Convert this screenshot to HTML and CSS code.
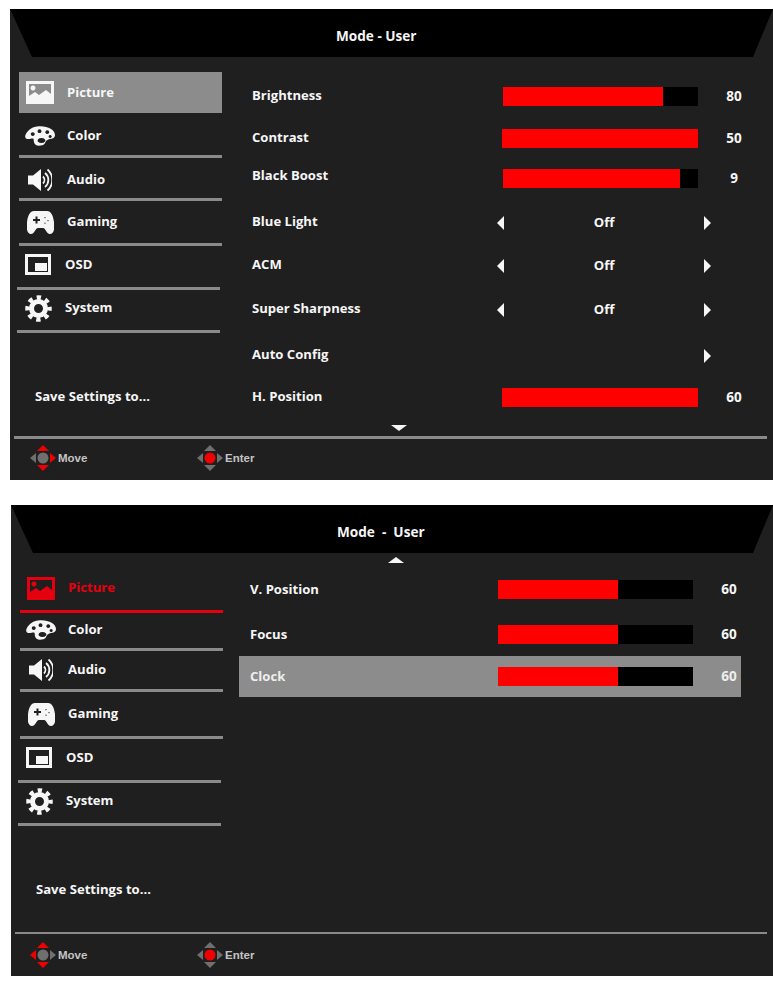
FILE: index.html
```html
<!DOCTYPE html>
<html lang="en">
<head>
    <meta charset="UTF-8">
    <meta name="viewport" content="width=device-width, initial-scale=1.0">
    <title>Mode - User</title>
    <link rel="stylesheet" href="styles.css">
</head>
<body>
    <!-- First page of the Picture menu -->
    <section class="osd osd-first">
        <header class="osd-header"><span class="osd-title">Mode - User</span></header>
        <div class="osd-body">
            <div class="sidebar">
                <ul class="menu">
                    <li class="menu-item menu-item-selected">
                        <span class="menu-icon"><svg width="28" height="23" viewBox="0 0 28 23"><path fill-rule="evenodd" d="M0 0H28V23H0ZM3 3V15L9 11L13 14L20 9L25 13V3ZM7 4.5a2.5 2.5 0 1 0 .01 0Z"/></svg></span>
                        Picture
                    </li>
                    <li class="menu-item">
                        <span class="menu-icon"><svg width="31" height="20" viewBox="0 0 31 20"><path fill-rule="evenodd" d="M16 0C24 0 31 4 31 9C31 14 25 12 22 15C20 18 21 20 14 20C10 20 9 17 9 14C9 11 5 14 2 13C-1 12 0 8 3 5C7 1 11 0 16 0ZM8 6a2 2 0 1 0 .01 0ZM15 3a2 2 0 1 0 .01 0ZM23 4a2 2 0 1 0 .01 0ZM26 9a1.6 1.6 0 1 0 .01 0ZM17 12a4 2.6 0 1 0 .01 0Z"/></svg></span>
                        Color
                    </li>
                    <li class="menu-item">
                        <span class="menu-icon"><svg width="24" height="24" viewBox="0 0 24 24"><path d="M0 7.500H5L13 1V23L5 16.500H0Z"/><path class="wave" d="M15 8.500a5 5 0 0 1 0 7M17 5a9 9 0 0 1 0 14M19.500 1.500a14 14 0 0 1 0 21"/></svg></span>
                        Audio
                    </li>
                    <li class="menu-item">
                        <span class="menu-icon"><svg width="27" height="23" viewBox="0 0 27 23"><path fill-rule="evenodd" d="M7 0H20C24 0 26 4 27 11C28 17 27 23 23 23C19 23 19 17 16 17H11C8 17 8 23 4 23C0 23 -1 17 0 11C1 4 3 0 7 0ZM6 8H8.500V5.500H10.500V8H13V10H10.500V12.500H8.500V10H6ZM18 6a.6 .6 0 1 0 .01 0ZM21 9a.6 .6 0 1 0 .01 0ZM18 11.500a.6 .6 0 1 0 .01 0Z"/></svg></span>
                        Gaming
                    </li>
                    <li class="menu-item">
                        <span class="menu-icon"><svg width="26" height="21" viewBox="0 0 26 21"><path fill-rule="evenodd" d="M0 0H26V21H0ZM3 3V18H23V3ZM10 9H22V17H10Z"/></svg></span>
                        OSD
                    </li>
                    <li class="menu-item">
                        <span class="menu-icon"><svg width="27" height="27" viewBox="0 0 27 27"><circle class="gear-ring" cx="13.500" cy="13.500" r="7"/><circle class="gear-teeth" cx="13.500" cy="13.500" r="11"/></svg></span>
                        System
                    </li>
                </ul>
                <p class="save-settings">Save Settings to...</p>
            </div>
            <div class="content">
                <div class="rows">
                    <div class="row">
                        <span class="row-label">Brightness</span>
                        <div class="bar"><div class="bar-fill" style="width: 160px"></div></div>
                        <span class="row-value">80</span>
                    </div>
                    <div class="row">
                        <span class="row-label">Contrast</span>
                        <div class="bar bar-wide"><div class="bar-fill" style="width: 196px"></div></div>
                        <span class="row-value">50</span>
                    </div>
                    <div class="row">
                        <span class="row-label row-label-high">Black Boost</span>
                        <div class="bar"><div class="bar-fill" style="width: 177px"></div></div>
                        <span class="row-value">9</span>
                    </div>
                    <div class="row">
                        <span class="row-label">Blue Light</span>
                        <div class="selector"><span class="arrow-left"></span><span class="selector-value">Off</span><span class="arrow-right"></span></div>
                    </div>
                    <div class="row">
                        <span class="row-label">ACM</span>
                        <div class="selector"><span class="arrow-left"></span><span class="selector-value">Off</span><span class="arrow-right"></span></div>
                    </div>
                    <div class="row">
                        <span class="row-label">Super Sharpness</span>
                        <div class="selector"><span class="arrow-left"></span><span class="selector-value">Off</span><span class="arrow-right"></span></div>
                    </div>
                    <div class="row">
                        <span class="row-label">Auto Config</span>
                        <div class="selector selector-end"><span class="arrow-right"></span></div>
                    </div>
                    <div class="row">
                        <span class="row-label">H. Position</span>
                        <div class="bar bar-wide"><div class="bar-fill" style="width: 196px"></div></div>
                        <span class="row-value">60</span>
                    </div>
                </div>
                <div class="more-down"></div>
            </div>
        </div>
        <footer class="osd-footer">
            <div class="hint">
                <svg class="dpad" width="26" height="26" viewBox="0 0 26 26"><path class="pad-grey" d="M0 13L6 8V18Z"/><path class="pad-red" d="M26 13L20 8V18Z"/><path class="pad-red" d="M13 0L7 6H19Z"/><path class="pad-red" d="M13 26L7 20H19Z"/><circle class="pad-grey" cx="13" cy="13" r="5.500"/></svg>
                Move
            </div>
            <div class="hint">
                <svg class="dpad" width="26" height="26" viewBox="0 0 26 26"><path class="pad-grey" d="M0 13L6 8V18Z"/><path class="pad-grey" d="M26 13L20 8V18Z"/><path class="pad-grey" d="M13 0L7 6H19Z"/><path class="pad-grey" d="M13 26L7 20H19Z"/><circle class="pad-red" cx="13" cy="13" r="5.500"/></svg>
                Enter
            </div>
        </footer>
    </section>

    <!-- Second page, scrolled down -->
    <section class="osd osd-second">
        <header class="osd-header"><span class="osd-title">Mode  -  User</span></header>
        <div class="osd-body">
            <div class="sidebar">
                <ul class="menu">
                    <li class="menu-item menu-item-active">
                        <span class="menu-icon"><svg width="28" height="23" viewBox="0 0 28 23"><path fill-rule="evenodd" d="M0 0H28V23H0ZM3 3V15L9 11L13 14L20 9L25 13V3ZM7 4.500a2.500 2.500 0 1 0 .01 0Z"/></svg></span>
                        Picture
                    </li>
                    <li class="menu-item">
                        <span class="menu-icon"><svg width="31" height="20" viewBox="0 0 31 20"><path fill-rule="evenodd" d="M16 0C24 0 31 4 31 9C31 14 25 12 22 15C20 18 21 20 14 20C10 20 9 17 9 14C9 11 5 14 2 13C-1 12 0 8 3 5C7 1 11 0 16 0ZM8 6a2 2 0 1 0 .01 0ZM15 3a2 2 0 1 0 .01 0ZM23 4a2 2 0 1 0 .01 0ZM26 9a1.6 1.6 0 1 0 .01 0ZM17 12a4 2.6 0 1 0 .01 0Z"/></svg></span>
                        Color
                    </li>
                    <li class="menu-item">
                        <span class="menu-icon"><svg width="24" height="24" viewBox="0 0 24 24"><path d="M0 7.500H5L13 1V23L5 16.500H0Z"/><path class="wave" d="M15 8.500a5 5 0 0 1 0 7M17 5a9 9 0 0 1 0 14M19.500 1.500a14 14 0 0 1 0 21"/></svg></span>
                        Audio
                    </li>
                    <li class="menu-item">
                        <span class="menu-icon"><svg width="27" height="23" viewBox="0 0 27 23"><path fill-rule="evenodd" d="M7 0H20C24 0 26 4 27 11C28 17 27 23 23 23C19 23 19 17 16 17H11C8 17 8 23 4 23C0 23 -1 17 0 11C1 4 3 0 7 0ZM6 8H8.500V5.500H10.500V8H13V10H10.500V12.500H8.500V10H6ZM18 6a.6 .6 0 1 0 .01 0ZM21 9a.6 .6 0 1 0 .01 0ZM18 11.500a.6 .6 0 1 0 .01 0Z"/></svg></span>
                        Gaming
                    </li>
                    <li class="menu-item">
                        <span class="menu-icon"><svg width="26" height="21" viewBox="0 0 26 21"><path fill-rule="evenodd" d="M0 0H26V21H0ZM3 3V18H23V3ZM10 9H22V17H10Z"/></svg></span>
                        OSD
                    </li>
                    <li class="menu-item">
                        <span class="menu-icon"><svg width="27" height="27" viewBox="0 0 27 27"><circle class="gear-ring" cx="13.500" cy="13.500" r="7"/><circle class="gear-teeth" cx="13.500" cy="13.500" r="11"/></svg></span>
                        System
                    </li>
                </ul>
                <p class="save-settings">Save Settings to...</p>
            </div>
            <div class="content">
                <div class="more-up"></div>
                <div class="rows">
                    <div class="row">
                        <span class="row-label">V. Position</span>
                        <div class="bar"><div class="bar-fill" style="width: 120px"></div></div>
                        <span class="row-value">60</span>
                    </div>
                    <div class="row">
                        <span class="row-label">Focus</span>
                        <div class="bar"><div class="bar-fill" style="width: 120px"></div></div>
                        <span class="row-value">60</span>
                    </div>
                    <div class="row row-selected">
                        <span class="row-label">Clock</span>
                        <div class="bar"><div class="bar-fill" style="width: 120px"></div></div>
                        <span class="row-value">60</span>
                    </div>
                </div>
            </div>
        </div>
        <footer class="osd-footer">
            <div class="hint">
                <svg class="dpad" width="26" height="26" viewBox="0 0 26 26"><path class="pad-red" d="M0 13L6 8V18Z"/><path class="pad-grey" d="M26 13L20 8V18Z"/><path class="pad-red" d="M13 0L7 6H19Z"/><path class="pad-red" d="M13 26L7 20H19Z"/><circle class="pad-grey" cx="13" cy="13" r="5.500"/></svg>
                Move
            </div>
            <div class="hint">
                <svg class="dpad" width="26" height="26" viewBox="0 0 26 26"><path class="pad-grey" d="M0 13L6 8V18Z"/><path class="pad-grey" d="M26 13L20 8V18Z"/><path class="pad-grey" d="M13 0L7 6H19Z"/><path class="pad-grey" d="M13 26L7 20H19Z"/><circle class="pad-red" cx="13" cy="13" r="5.500"/></svg>
                Enter
            </div>
        </footer>
    </section>
</body>
</html>
```

FILE: styles.css
```css
body {
    font-family: "Open Sans", Arial, sans-serif;
    font-size: 13.1px;
    font-weight: 700;
    background-color: white;
    color: #f6f6f6;
    margin: 0;
    padding: 9px 0 5px;
}

.osd {
    background-color: #201f20;
    height: 471px;
    display: flex;
    flex-direction: column;
}

.osd-first {
    margin-left: 10px;
    margin-bottom: 25px;
}

.osd-second {
    margin-left: 11px;
}

.osd-header {
    background-color: black;
    height: 48px;
    box-sizing: border-box;
    padding: 18px 0 0 326px;
    font-size: 13.6px;
    line-height: 18px;
    clip-path: polygon(0 0, 100% 0, calc(100% - 20px) 100%, 22px 100%);
}

.osd-title {
    white-space: pre;
}

.osd-body {
    flex: 1;
    display: flex;
    min-height: 0;
}

/* left column */
.sidebar {
    width: 203px;
    margin-left: 9px;
    padding-top: 15px;
}

.menu {
    list-style-type: none;
    margin: 0;
    padding: 0;
    display: grid;
}

.osd-first .menu {
    grid-template-rows: 41px 45px 43px 45px 44px 43px;
}

.osd-second .menu {
    grid-template-rows: 45px 38px 41px 47px 44px 43px;
}

.menu-item {
    width: 203px;
    box-sizing: border-box;
    display: flex;
    align-items: center;
    padding-left: 6px;
    padding-bottom: 2px;
    border-bottom: 3px solid #8a8a8a;
}

.menu-item:nth-child(n+5) {
    margin-left: -2px;
    padding-bottom: 6px;
}

.osd-first .menu-item:nth-child(2),
.osd-first .menu-item:nth-child(3) {
    padding-top: 4px;
}

.osd-second .menu-item:nth-child(2) {
    padding-bottom: 3px;
}

.osd-second .menu-item:nth-child(1) {
    padding-bottom: 4px;
}

.menu-item-selected {
    background-color: #8c8c8c;
    border-bottom: none;
}

.menu-item-active {
    color: #e4000f;
    border-bottom-color: #e4000f;
}

.menu-icon {
    width: 30px;
    margin-right: 12px;
    margin-top: 2px;
    display: flex;
    justify-content: center;
}

.menu-icon svg {
    display: block;
    fill: currentColor;
}

.menu-icon .wave {
    fill: none;
    stroke: currentColor;
    stroke-width: 1.8;
}

.menu-icon .gear-ring {
    fill: none;
    stroke: currentColor;
    stroke-width: 5;
}

.menu-icon .gear-teeth {
    fill: none;
    stroke: currentColor;
    stroke-width: 4.5;
    stroke-dasharray: 4.3 4.34;
    stroke-dashoffset: 2.15;
}

.save-settings {
    margin: 53px 0 0 16px;
    line-height: 20px;
}

/* right column */
.osd-first .content {
    margin-left: 19px;
    padding-top: 19px;
}

.osd-second .content {
    margin-left: 16px;
    padding-top: 4px;
}

.rows {
    display: grid;
}

.osd-first .rows {
    grid-template-rows: 42px 40px 44px 43px 44px 46px 42px 41px;
}

.osd-second .rows {
    grid-template-rows: 45px 42px 41px;
    margin-top: 6px;
}

.row {
    height: 41px;
    display: flex;
    align-items: center;
    padding-left: 11px;
}

.row-selected {
    background-color: #8c8c8c;
    color: #eeeeee;
}

.osd-second .row {
    width: 502px;
    box-sizing: border-box;
}

.row-label {
    width: 251px;
    margin-bottom: 3px;
}

.osd-second .row-label {
    width: 248px;
    margin-bottom: 1px;
}

.row-label-high {
    margin-bottom: 8px;
}

.bar {
    width: 195px;
    height: 19px;
    background-color: black;
    flex-shrink: 0;
}

.bar-wide {
    width: 196px;
    margin-left: -1px;
}

.bar-fill {
    height: 100%;
    background-color: #ff0000;
}

.row-value {
    width: 24px;
    margin-left: 24px;
    margin-bottom: 1px;
    font-size: 13.5px;
    text-align: center;
    flex-shrink: 0;
}

.selector {
    width: 214px;
    margin-left: -6px;
    display: flex;
    justify-content: space-between;
    align-items: center;
}

.selector-value {
    margin-bottom: 2px;
}

.selector-end {
    justify-content: flex-end;
}

.arrow-left,
.arrow-right {
    width: 0;
    height: 0;
    border-top: 7px solid transparent;
    border-bottom: 7px solid transparent;
}

.arrow-left {
    border-right: 7px solid #f6f6f6;
}

.arrow-right {
    border-left: 7px solid #f6f6f6;
}

.more-down,
.more-up {
    width: 0;
    height: 0;
    border-left: 8px solid transparent;
    border-right: 8px solid transparent;
}

.more-down {
    margin: 7px 0 0 150px;
    border-top: 6px solid #f6f6f6;
}

.more-up {
    margin-left: 149px;
    border-bottom: 6px solid #f6f6f6;
}

/* footer */
.osd-footer {
    height: 44px;
    box-sizing: border-box;
    margin: 0 6px 0 4px;
    border-top: 3px solid #8a8a8a;
    padding-left: 16px;
    padding-bottom: 4px;
    display: flex;
    align-items: center;
}

.osd-second .osd-footer {
    border-top-width: 2px;
    margin-right: 6px;
    padding-left: 15px;
    padding-bottom: 0;
}

.hint {
    width: 167px;
    display: flex;
    align-items: center;
    gap: 2px;
    font-family: "Liberation Sans", Arial, sans-serif;
    font-size: 11.5px;
    color: #c4c4c4;
}

.dpad {
    display: block;
}

.pad-grey {
    fill: #6f6f6f;
}

.pad-red {
    fill: #f00000;
}
```
